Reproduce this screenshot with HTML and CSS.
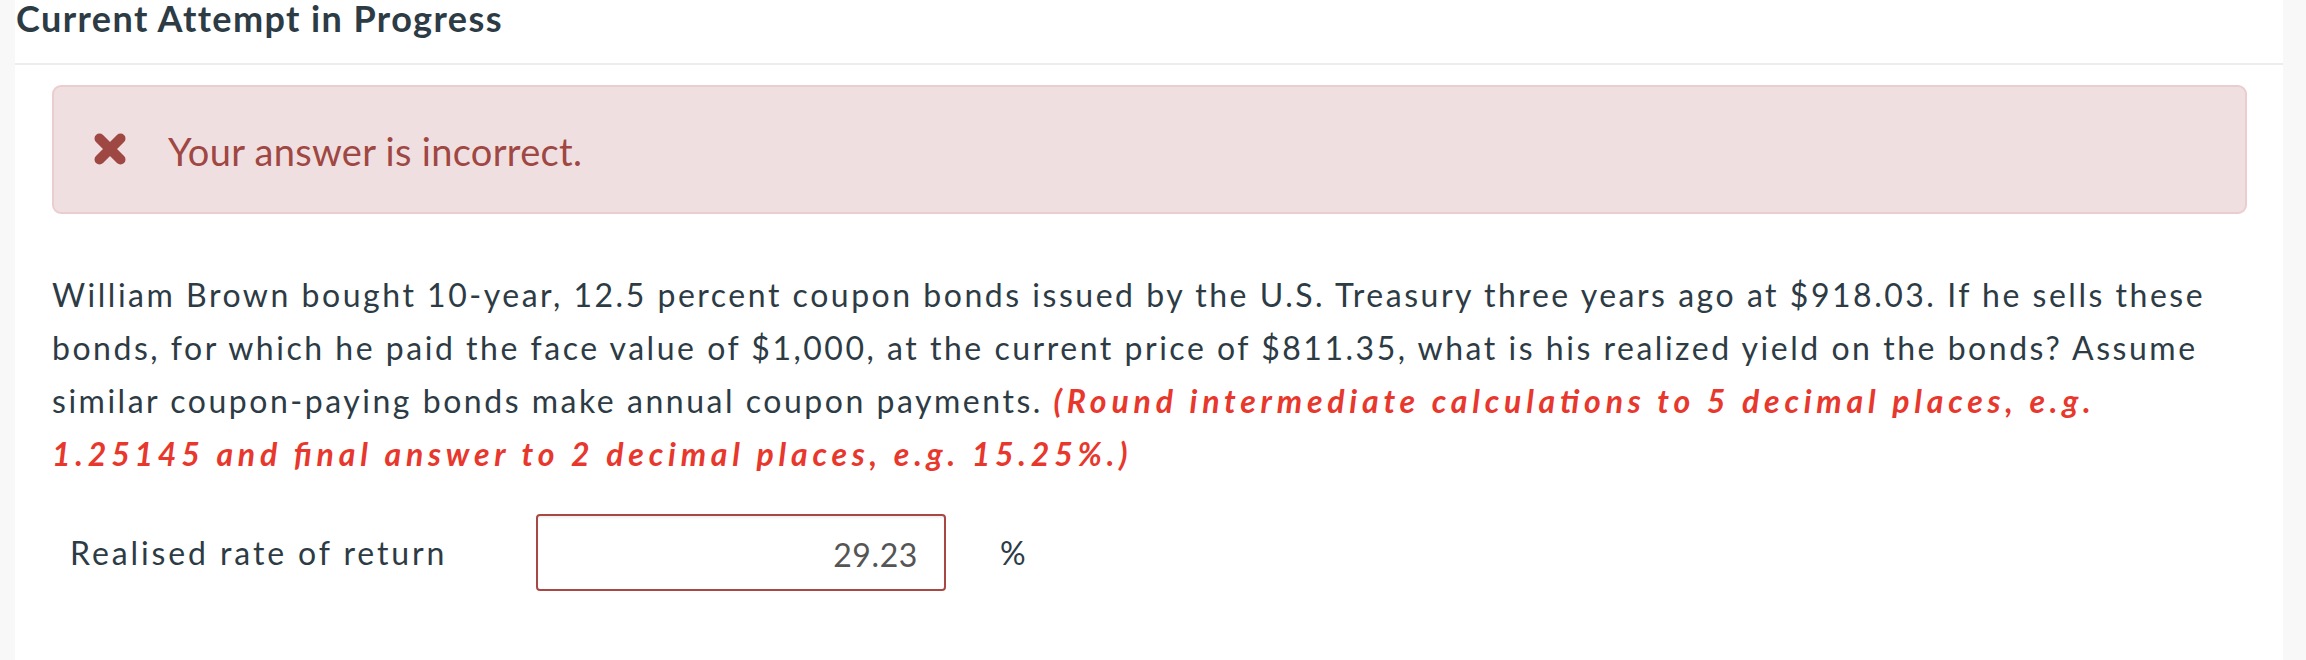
FILE: index.html
```html
<!DOCTYPE html>
<html lang="en">
<head>
<meta charset="utf-8">
<title>Current Attempt in Progress</title>
<link rel="stylesheet" href="styles.css">
</head>
<body>
<div class="page">
  <div class="rail rail-left"></div>
  <main class="main">
    <h1 class="title">Current Attempt in Progress</h1>
    <div class="content">
      <div class="alert">
        <svg class="x-icon" viewBox="0 0 34 34" aria-hidden="true">
          <path d="M6.5 6.5 L27.5 27.5 M27.5 6.5 L6.5 27.5" />
        </svg>
        <span class="alert-text">Your answer is incorrect.</span>
      </div>
      <p class="question">William Brown bought 10-year, 12.5 percent coupon bonds issued by the U.S. Treasury three years ago at $918.03. If he sells these bonds, for which he paid the face value of $1,000, at the current price of $811.35, what is his realized yield on the bonds? Assume similar coupon-paying bonds make annual coupon payments. <em class="hint">(Round intermediate calculations to 5 decimal places, e.g. 1.25145 and final answer to 2 decimal places, e.g. 15.25%.)</em></p>
      <div class="answer-row">
        <span class="answer-label">Realised rate of return</span>
        <div class="answer-input">29.23</div>
        <span class="answer-unit">%</span>
      </div>
    </div>
  </main>
  <div class="rail rail-right"></div>
</div>
</body>
</html>
```

FILE: styles.css
```css
html, body {
  margin: 0;
  padding: 0;
  background: #ffffff;
}

body {
  font-family: Lato, "Open Sans", "Liberation Sans", sans-serif;
  color: #2d3b45;
}

.page {
  display: flex;
  width: 2306px;
  height: 660px;
  overflow: hidden;
}

.rail {
  background: #f8f8f8;
  flex: none;
}

.rail-left {
  width: 15px;
}

.rail-right {
  width: 23px;
}

.main {
  flex: 1;
  min-width: 0;
  background: #ffffff;
}

.title {
  margin: 0;
  padding: 0 0 27px 1px;
  font-size: 36px;
  line-height: 36px;
  font-weight: 700;
  letter-spacing: 1.4px;
  color: #2d3b45;
  border-bottom: 2px solid #ececec;
}

.content {
  padding: 20px 36px 0 37px;
}

.alert {
  display: flex;
  align-items: center;
  height: 129px;
  box-sizing: border-box;
  padding: 3px 38px 0 39px;
  background: #f0dfe0;
  border: 2px solid #ebcdd0;
  border-radius: 9px;
}

.x-icon {
  width: 34px;
  height: 34px;
  flex: none;
  margin-top: -4px;
}

.x-icon path {
  stroke: #9f4743;
  stroke-width: 10;
  stroke-linecap: round;
  fill: none;
}

.alert-text {
  margin-left: 41px;
  font-size: 38px;
  line-height: 54px;
  letter-spacing: 0.3px;
  color: #9f4743;
}

.question {
  margin: 54px 0 0 0;
  font-size: 32px;
  line-height: 53px;
  letter-spacing: 2.52px;
  color: #2d3b45;
}

.hint {
  font-weight: 700;
  font-style: italic;
  color: #e8372c;
  letter-spacing: 4.8px;
  font-feature-settings: "liga" 1;
}

.answer-row {
  display: flex;
  align-items: center;
  margin-top: 34px;
  padding-left: 18px;
}

.answer-label {
  width: 466px;
  flex: none;
  font-size: 32px;
  line-height: 40px;
  letter-spacing: 2.9px;
  color: #2d3b45;
}

.answer-input {
  width: 410px;
  height: 77px;
  box-sizing: border-box;
  flex: none;
  display: flex;
  align-items: center;
  justify-content: flex-end;
  padding: 4px 26px 0 0;
  border: 2px solid #a84844;
  border-radius: 4px;
  box-shadow: inset 0 2px 2px rgba(0, 0, 0, 0.06);
  font-size: 32px;
  letter-spacing: 0.6px;
  color: #555555;
}

.answer-unit {
  margin-left: 54px;
  font-size: 32px;
  line-height: 40px;
  color: #2d3b45;
}
```
